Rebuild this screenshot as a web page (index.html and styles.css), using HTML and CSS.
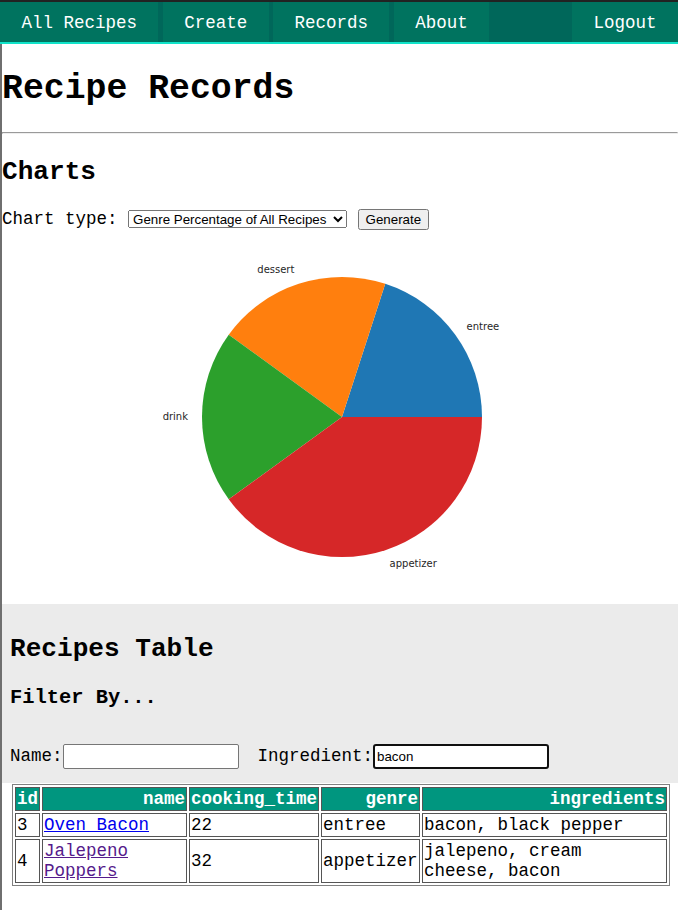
FILE: index.html
```html
<!DOCTYPE html>
<html lang="en">
<head>
<meta charset="utf-8">
<title>Recipe Records</title>
<link rel="stylesheet" href="styles.css">
</head>
<body>
<nav class="topnav">
  <a class="nav-item" href="#">All Recipes</a>
  <a class="nav-item" href="#">Create</a>
  <a class="nav-item" href="#">Records</a>
  <a class="nav-item" href="#">About</a>
  <span class="nav-spacer"></span>
  <a class="nav-item nav-last" href="#">Logout</a>
</nav>
<div class="page">
  <h1 class="page-title">Recipe Records</h1>
  <hr class="rule">
  <h2 class="section-title">Charts</h2>
  <form class="chart-form">Chart type: <select class="chart-select"><option>Genre Percentage of All Recipes</option></select> <button type="button" class="chart-btn">Generate</button></form>
  <svg class="chart" width="676" height="374" viewBox="0 0 676 374" xmlns="http://www.w3.org/2000/svg">
    <path d="M340,187 L480,187 A140,140 0 0,0 383.26,53.85 Z" fill="#1f77b4"/>
    <path d="M340,187 L383.26,53.85 A140,140 0 0,0 226.74,104.71 Z" fill="#ff7f0e"/>
    <path d="M340,187 L226.74,104.71 A140,140 0 0,0 226.74,269.29 Z" fill="#2ca02c"/>
    <path d="M340,187 L226.74,269.29 A140,140 0 0,0 480,187 Z" fill="#d62728"/>
    <text class="pie-label" x="464.6" y="96" text-anchor="start">entree</text>
    <text class="pie-label" x="292.4" y="39.5" text-anchor="end">dessert</text>
    <text class="pie-label" x="186" y="186.5" text-anchor="end">drink</text>
    <text class="pie-label" x="387.6" y="333" text-anchor="start">appetizer</text>
  </svg>
  <section class="table-section">
    <h2 class="section-title">Recipes Table</h2>
    <h3 class="filter-title">Filter By...</h3>
    <div class="filters"><label>Name:<input class="filter-input" type="text"></label><label class="filter-second">Ingredient:<input class="filter-input focused" type="text" value="bacon"></label></div>
  </section>
  <table class="recipes">
    <thead>
      <tr><th class="c-id">id</th><th class="c-name">name</th><th class="c-time">cooking_time</th><th class="c-genre">genre</th><th class="c-ingr">ingredients</th></tr>
    </thead>
    <tbody>
      <tr><td>3</td><td><a href="#" class="link">Oven Bacon</a></td><td>22</td><td>entree</td><td>bacon, black pepper</td></tr>
      <tr><td>4</td><td><a href="#" class="link visited">Jalepeno Poppers</a></td><td>32</td><td>appetizer</td><td>jalepeno, cream cheese, bacon</td></tr>
    </tbody>
  </table>
</div>
</body>
</html>
```
FILE: styles.css
```css
body {
  margin: 0;
  font-family: "Liberation Mono", "Courier New", monospace;
  font-size: 17.5px;
  color: #000;
  background: #fff;
}

.topnav {
  display: flex;
  height: 40px;
  background: #00675a;
  border-top: 2px solid #222;
  border-bottom: 2px solid #10e3c9;
}

.nav-item {
  display: flex;
  align-items: center;
  padding: 2px 21.4px 0;
  margin-right: 4.5px;
  background: #00735f;
  color: #fff;
  text-decoration: none;
}

.nav-spacer {
  flex: 1;
}

.nav-last {
  margin-right: 0;
}

.page {
  display: flow-root;
  border-left: 2px solid #6f6f6f;
  min-height: 866px;
}

.page-title {
  font-size: 34.8px;
  margin: 25px 0 24px;
}

.rule {
  margin: 0;
}

.section-title {
  font-size: 26.1px;
  margin: 22.5px 0 22px;
}

.chart-form {
  margin: 0;
}

.chart-select {
  font-family: "Liberation Sans", Arial, sans-serif;
  font-size: 13.33px;
  width: 219px;
  height: 18px;
}

.chart-btn {
  font-family: "Liberation Sans", Arial, sans-serif;
  font-size: 13.33px;
}

.chart {
  display: block;
}

.pie-label {
  font-family: "DejaVu Sans", sans-serif;
  font-size: 10px;
  fill: #262626;
  dominant-baseline: central;
}

.table-section {
  background: #ebebeb;
  padding: 9px 8px 14px;
}

.table-section .section-title {
  margin: 21.7px 0;
}

.filter-title {
  font-size: 20.4px;
  margin: 20.4px 0;
}

.filters {
  margin-top: 35px;
}

.filter-input {
  box-sizing: border-box;
  width: 176px;
  height: 25px;
  font-family: "Liberation Sans", Arial, sans-serif;
  font-size: 13.33px;
  border: 1px solid #767676;
  border-radius: 2px;
  padding: 1px 2px;
  background: #fff;
}

.filter-input.focused {
  border: 2px solid #101010;
  border-radius: 3px;
  outline: none;
}

.filter-second {
  margin-left: 19px;
}

.recipes {
  margin: 1px 0 0 10px;
  width: 658px;
  table-layout: fixed;
  border: 1px solid #808080;
  border-spacing: 2px;
}

.recipes th,
.recipes td {
  box-sizing: border-box;
  border: 1px solid #555;
  padding: 1px;
}

.recipes th {
  background: #00967f;
  color: #fff;
  text-align: right;
  font-weight: bold;
}

.recipes td {
  text-align: left;
  vertical-align: middle;
}

.c-id { width: 25px; }
.c-name { width: 145px; }
.c-time { width: 130px; }
.c-genre { width: 99px; }
.c-ingr { width: 245px; }

.link {
  color: #0000ee;
}

.link.visited {
  color: #551a8b;
}
```
